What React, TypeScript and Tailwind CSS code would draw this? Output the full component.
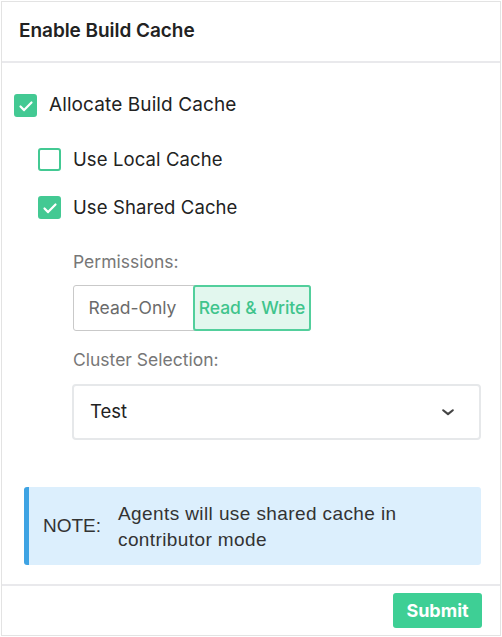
import { useState } from 'react'

const font = { fontFamily: 'Inter, "Noto Sans", sans-serif' }

function Check({ checked, onClick }: { checked: boolean; onClick?: () => void }) {
  return (
    <button
      onClick={onClick}
      className={`flex h-[23px] w-[23px] shrink-0 items-center justify-center rounded-[3px] border-2 ${
        checked ? 'border-[#43c993] bg-[#43c993]' : 'border-[#43c993] bg-white'
      }`}
    >
      {checked && (
        <svg width="16" height="16" viewBox="0 0 16 16" fill="none">
          <path d="M2.5 8.5l3.6 3.6L13.5 4.5" stroke="white" strokeWidth="2.2" strokeLinecap="round" strokeLinejoin="round" />
        </svg>
      )}
    </button>
  )
}

export default function App() {
  const [alloc, setAlloc] = useState(true)
  const [local, setLocal] = useState(false)
  const [shared, setShared] = useState(true)
  const [perm, setPerm] = useState<'ro' | 'rw'>('rw')

  return (
    <div className="h-[637px] w-[502px] bg-white p-px" style={font}>
      <div className="flex h-[635px] w-[500px] flex-col border border-[#e3e3e3] text-[#222]">
        {/* header */}
        <div className="flex h-[61px] shrink-0 items-center border-b-2 border-[#e9e9ec] px-[17px]">
          <h1 className="text-[19px] font-semibold tracking-[-0.05px] text-[#222]">Enable Build Cache</h1>
        </div>

        <div className="flex flex-1 flex-col pl-[12px] pr-[19px] pt-[31px]">
          <label className="flex h-[23px] items-center gap-[12px]">
            <Check checked={alloc} onClick={() => setAlloc(!alloc)} />
            <span className="text-[19px] tracking-[0.1px]">Allocate Build Cache</span>
          </label>

          <div className="flex flex-col pl-[24px]">
            <label className="mt-[31px] flex h-[23px] items-center gap-[12px]">
              <Check checked={local} onClick={() => setLocal(!local)} />
              <span className="text-[18.5px] tracking-[0.1px]">Use Local Cache</span>
            </label>
            <label className="mt-[25px] flex h-[23px] items-center gap-[12px]">
              <Check checked={shared} onClick={() => setShared(!shared)} />
              <span className="text-[18.5px] tracking-[0.1px]">Use Shared Cache</span>
            </label>

            <div className="flex flex-col pl-[35px]">
              <p className="mt-[33px] h-[20px] text-[17.5px] leading-[20px] text-[#777]">Permissions:</p>
              <div className="mt-[13px] flex h-[46px] w-[238px] rounded-[3px] border border-[#c9c9c9]">
                <button
                  onClick={() => setPerm('ro')}
                  className={`flex w-[119px] items-center justify-center pr-[2px] text-[17.5px] ${
                    perm === 'ro' ? 'rounded-[3px] border-2 border-[#52cf9c] bg-[#e2f7ee] text-[#3fc48c]' : 'text-[#6b6b6b]'
                  }`}
                >
                  Read-Only
                </button>
                <button
                  onClick={() => setPerm('rw')}
                  className={`-my-px -mr-px flex flex-1 items-center justify-center text-[17.5px] font-medium tracking-[-0.1px] ${
                    perm === 'rw' ? 'rounded-[3px] border-2 border-[#52cf9c] bg-[#e2f7ee] text-[#3fc48c]' : 'text-[#6b6b6b]'
                  }`}
                >
                  Read &amp; Write
                </button>
              </div>

              <p className="mt-[19px] h-[20px] text-[17.5px] leading-[20px] text-[#777]">Cluster Selection:</p>
              <div className="-ml-px mt-[14px] flex h-[56px] items-center justify-between rounded-[4px] border-2 border-[#e6e8ea] pl-[16px] pr-[24px]">
                <span className="text-[18.5px] text-[#222]">Test</span>
                <svg width="14" height="14" viewBox="0 0 16 16" fill="none">
                  <path d="M2.5 6l5.5 4.5L13.5 6" stroke="#444" strokeWidth="2.4" strokeLinecap="round" strokeLinejoin="round" />
                </svg>
              </div>
            </div>
          </div>

          <div
            className="ml-[10px] mt-[47px] flex h-[78px] items-center rounded-[3px] border-l-[5px] border-[#3ea3e3] bg-[#dceffd] pl-[14px]"
            style={{ fontFamily: '"Liberation Sans", Arial, sans-serif' }}
          >
            <span className="w-[75px] shrink-0 text-[19px] text-[#333]">NOTE:</span>
            <span className="pt-[1px] text-[19px] leading-[26px] tracking-[0.4px] text-[#333]">
              Agents will use shared cache in
              <br />
              contributor mode
            </span>
          </div>
        </div>

        {/* footer */}
        <div className="flex h-[51px] shrink-0 items-center justify-end border-t-2 border-[#e9e9ec] pr-[18px]">
          <button className="flex h-[35px] w-[89px] items-center justify-center rounded-[3px] bg-[#3ecf95] text-[18px] font-bold text-white">
            Submit
          </button>
        </div>
      </div>
    </div>
  )
}
